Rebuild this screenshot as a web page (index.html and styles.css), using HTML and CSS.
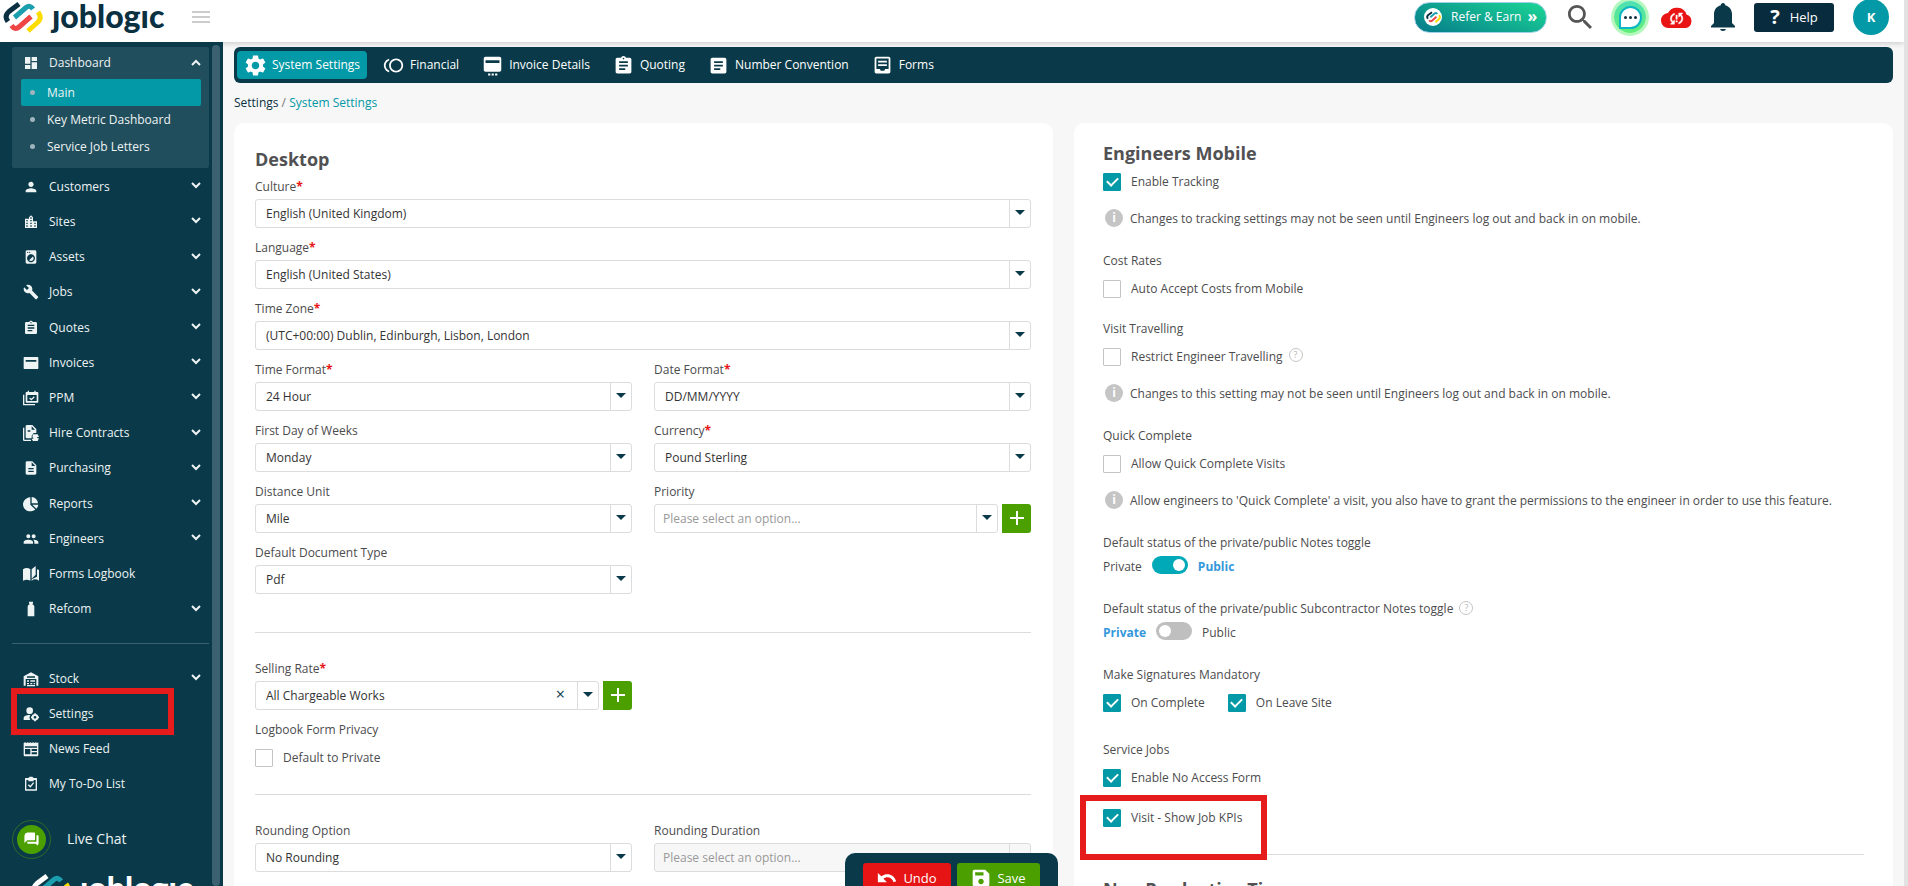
FILE: index.html
```html
<!DOCTYPE html>
<html lang="en">
<head>
<meta charset="utf-8">
<title>Joblogic - System Settings</title>
<link rel="stylesheet" href="styles.css">
</head>
<body>
<svg class="sprite" aria-hidden="true">
  <symbol id="mark" viewBox="0 0 40 32">
    <g fill="none" stroke-width="5" stroke-linecap="butt">
      <path class="mark-dark" d="M16 3L6 10.500Q1.500 14.500 4 19L5 20.500"/>
      <path stroke="#1b9fae" d="M11.500 16.500L23 6.500Q27 3.500 30 8"/>
      <path stroke="#f04545" d="M8.500 24.500Q12 29.500 16 26L28 15.500"/>
      <path stroke="#fddc00" d="M35 11L36 12.500Q39 17.500 34.500 21.500L25 30"/>
    </g>
  </symbol>
  <symbol id="chevron" viewBox="0 0 10 10"><path d="M1 3l4 4 4-4" fill="none" stroke="currentColor" stroke-width="2"/></symbol>
  <symbol id="dashboard" viewBox="0 0 24 24"><path d="M3 13h8V3H3v10zm0 8h8v-6H3v6zm10 0h8V11h-8v10zm0-18v6h8V3h-8z"/></symbol>
  <symbol id="person" viewBox="0 0 24 24"><path d="M12 12c2.210 0 4-1.790 4-4s-1.790-4-4-4-4 1.790-4 4 1.790 4 4 4zm0 2c-2.670 0-8 1.340-8 4v2h16v-2c0-2.660-5.330-4-8-4z"/></symbol>
  <symbol id="city" viewBox="0 0 24 24"><path d="M15 11V5l-3-3-3 3v2H3v14h18V11h-6zm-8 8H5v-2h2v2zm0-4H5v-2h2v2zm0-4H5V9h2v2zm6 8h-2v-2h2v2zm0-4h-2v-2h2v2zm0-4h-2V9h2v2zm0-4h-2V5h2v2zm6 12h-2v-2h2v2zm0-4h-2v-2h2v2z"/></symbol>
  <symbol id="washer" viewBox="0 0 24 24"><path d="M9.170 16.830c1.560 1.560 4.100 1.560 5.660 0 1.560-1.560 1.560-4.100 0-5.660l-5.660 5.660zM18 2.010L6 2c-1.110 0-2 .89-2 2v16c0 1.110.89 2 2 2h12c1.110 0 2-.89 2-2V4c0-1.110-.89-1.990-2-1.990zM10 4c.55 0 1 .45 1 1s-.45 1-1 1-1-.45-1-1 .45-1 1-1zM7 4c.55 0 1 .45 1 1s-.45 1-1 1-1-.45-1-1 .45-1 1-1zm5 16c-3.310 0-6-2.690-6-6s2.690-6 6-6 6 2.690 6 6-2.690 6-6 6z"/></symbol>
  <symbol id="wrench" viewBox="0 0 24 24"><path d="M22.700 19l-9.100-9.100c.9-2.300.4-5-1.500-6.900-2-2-5-2.400-7.400-1.300L9 6 6 9 1.600 4.700C.4 7.100.9 10.100 2.900 12.100c1.900 1.900 4.600 2.400 6.900 1.500l9.100 9.100c.4.4 1 .4 1.400 0l2.300-2.300c.5-.4.5-1.100.1-1.400z"/></symbol>
  <symbol id="clipboard" viewBox="0 0 24 24"><path d="M19 3h-4.180C14.400 1.840 13.300 1 12 1c-1.300 0-2.400.84-2.820 2H5c-1.100 0-2 .9-2 2v14c0 1.100.9 2 2 2h14c1.100 0 2-.9 2-2V5c0-1.100-.9-2-2-2zm-7 0c.55 0 1 .45 1 1s-.45 1-1 1-1-.45-1-1 .45-1 1-1zm2 14H7v-2h7v2zm3-4H7v-2h10v2zm0-4H7V7h10v2z"/></symbol>
  <symbol id="card" viewBox="0 0 24 24"><path fill-rule="evenodd" d="M2 3h20c.6 0 1 .4 1 1v16c0 .6-.4 1-1 1H2c-.6 0-1-.4-1-1V4c0-.6.4-1 1-1zM4 7.500V10h16V7.500z"/></symbol>
  <symbol id="events" viewBox="0 0 24 24"><path fill-rule="evenodd" d="M7 1h2v2h8V1h2v2h3c.6 0 1 .4 1 1v14c0 .6-.4 1-1 1H5c-.6 0-1-.4-1-1V4c0-.6.400-1 1-1h2zM6.500 7.500v9h14v-9zM0 7h2v14h16v2H1c-.6 0-1-.4-1-1z"/><path d="M10 12l2.500 2.500L17 10" fill="none" stroke="currentColor" stroke-width="2"/></symbol>
  <symbol id="hire" viewBox="0 0 24 24"><path fill-rule="evenodd" d="M6 0h8l6 6v6h-4l-3 4v4H6c-1 0-2-1-2-2V2c0-1 1-2 2-2zm7 2v5h5zM7 8v2h4V8zM0 4h2v18h10v2H2c-1 0-2-1-2-2z"/><path d="M15 14h7l2 4h-3l1 2h2l-2 4h-7l-2-3 3-1-2-2z"/></symbol>
  <symbol id="doc" viewBox="0 0 24 24"><path d="M14 2H6c-1.100 0-1.990.9-1.990 2L4 20c0 1.100.89 2 1.990 2H18c1.100 0 2-.9 2-2V8l-6-6zm2 16H8v-2h8v2zm0-4H8v-2h8v2zm-3-5V3.500L18.500 9H13z"/></symbol>
  <symbol id="pie" viewBox="0 0 24 24"><path d="M11 2v11l7.500 7.200A11 10.500 0 1 1 11 2zM13 1.500A10 10 0 0 1 22.500 11H13zM14 13h9a10 10 0 0 1-3 6z"/></symbol>
  <symbol id="group" viewBox="0 0 24 24"><path d="M16 11c1.660 0 2.990-1.340 2.990-3S17.660 5 16 5c-1.660 0-3 1.340-3 3s1.340 3 3 3zm-8 0c1.660 0 2.990-1.340 2.990-3S9.660 5 8 5C6.340 5 5 6.340 5 8s1.340 3 3 3zm0 2c-2.330 0-7 1.170-7 3.500V19h14v-2.500c0-2.330-4.670-3.500-7-3.500zm8 0c-.29 0-.62.02-.97.05 1.160.84 1.970 1.970 1.970 3.450V19h6v-2.500c0-2.330-4.670-3.500-7-3.500z"/></symbol>
  <symbol id="book" viewBox="0 0 24 24"><path d="M0 5q6-4 11 0v17q-5-3-11 0zM19 0l-6 5v14l6-6zM21 5l3 1v16q-6-4-11 0v-2l8-4z"/></symbol>
  <symbol id="bottle" viewBox="0 0 24 24"><path d="M9 1h6v3h-1v1c2 1 3 2 3 4v14H7V9c0-2 1-3 3-4V4H9z"/></symbol>
  <symbol id="warehouse" viewBox="0 0 24 24"><path d="M1 22V8l11-6 11 6v14h-3V12H4v10zM6 8v2h12V8zm0 6h3v2H6zm5 0h7v2h-7zm-5 4h3v2H6zm5 0h3v2h-3zm5 0h2v2h-2zM6 21h12v2H6z"/></symbol>
  <symbol id="usercog" viewBox="0 0 24 24"><circle cx="10" cy="7" r="5"/><path d="M1 21v-3c0-3 5-5 10-4.500-1.500 2.500-1.500 5 0 7.500z"/><circle cx="18" cy="17" r="3.500" fill="none" stroke="currentColor" stroke-width="3"/><path d="M16.800 11h2.500v2.500h-2.500zM16.800 20.500h2.500V23h-2.500zM12 15.800h2.500v2.500H12zM21.500 15.800H24v2.500h-2.500z"/></symbol>
  <symbol id="news" viewBox="0 0 24 24"><path fill-rule="evenodd" d="M1 3l2-1 2 1 2-1 2 1 2-1 2 1 2-1 2 1 2-1 2 1 2-1v19c0 1-1 2-2 2H3c-1 0-2-1-2-2zm2 5v2h18V8zm0 4v8h8v-8zm10 0v3h8v-3zm0 5v3h8v-3z"/></symbol>
  <symbol id="todo" viewBox="0 0 24 24"><path fill-rule="evenodd" d="M8 3l2-2h4l2 2h4c.6 0 1 .4 1 1v17c0 .6-.4 1-1 1H4c-.6 0-1-.4-1-1V4c0-.6.4-1 1-1zM5 6v14h14V6h-3v2H8V6z"/><path d="M8 13l3 3 5-6" fill="none" stroke="currentColor" stroke-width="2"/></symbol>
  <symbol id="gear" viewBox="2 2 20 20"><path d="M19.140 12.940c.04-.3.060-.61.060-.94 0-.32-.02-.64-.07-.94l2.030-1.580c.18-.14.23-.41.120-.61l-1.920-3.320c-.12-.22-.37-.29-.59-.22l-2.390.96c-.5-.38-1.030-.7-1.620-.94l-.36-2.540c-.04-.24-.24-.41-.48-.41h-3.840c-.24 0-.43.17-.47.41l-.36 2.540c-.59.24-1.130.57-1.620.94l-2.390-.96c-.22-.08-.47 0-.59.220L2.740 8.870c-.12.210-.08.47.120.61l2.030 1.580c-.05.3-.09.630-.09.940s.02.64.07.940l-2.030 1.580c-.18.14-.23.410-.12.610l1.920 3.320c.12.22.37.290.59.220l2.390-.96c.5.380 1.030.7 1.620.94l.36 2.540c.05.24.24.410.48.410h3.840c.24 0 .44-.17.470-.41l.36-2.540c.59-.24 1.130-.56 1.620-.94l2.390.96c.22.080.47 0 .59-.22l1.920-3.320c.12-.22.070-.47-.12-.61l-2.010-1.580zM12 15.600c-1.980 0-3.600-1.620-3.600-3.600s1.620-3.600 3.600-3.600 3.600 1.620 3.600 3.600-1.620 3.600-3.600 3.600z"/></symbol>
  <symbol id="toll" viewBox="0 0 24 24"><path d="M15 4c-4.420 0-8 3.580-8 8s3.580 8 8 8 8-3.580 8-8-3.580-8-8-8zm0 14c-3.310 0-6-2.690-6-6s2.690-6 6-6 6 2.690 6 6-2.690 6-6 6zM3 12c0-2.610 1.670-4.830 4-5.650V4.260C3.550 5.150 1 8.270 1 12s2.550 6.850 6 7.740v-2.090c-2.330-.82-4-3.040-4-5.650z"/></symbol>
  <symbol id="invoice" viewBox="0 0 24 24"><path fill-rule="evenodd" d="M4 2h16c1 0 2 1 2 2v13c0 1-1 2-2 2H4c-1 0-2-1-2-2V4c0-1 1-2 2-2zm0 4v3h16V6zM7 21h2.500v2.500H7zm4 0h2.500v2.500H11zm4 0h2.500v2.500H15z"/></symbol>
  <symbol id="article" viewBox="0 0 24 24"><path d="M19 3H5c-1.100 0-2 .9-2 2v14c0 1.100.9 2 2 2h14c1.100 0 2-.9 2-2V5c0-1.100-.9-2-2-2zm-5 14H7v-2h7v2zm3-4H7v-2h10v2zm0-4H7V7h10v2z"/></symbol>
  <symbol id="forms" viewBox="0 0 24 24"><path fill-rule="evenodd" d="M5 2h14c1.100 0 2 .9 2 2v15c0 1.100-.9 2-2 2H5c-1.100 0-2-.9-2-2V4c0-1.100.9-2 2-2zm0 2v12h4l1 2h4l1-2h4V4zM7 6.500h10v2H7zm0 4h10v2H7z"/></symbol>
  <symbol id="search" viewBox="3 3 17.500 17.500"><path d="M15.500 14h-.79l-.28-.27C15.410 12.590 16 11.110 16 9.500 16 5.910 13.090 3 9.500 3S3 5.910 3 9.500 5.910 16 9.500 16c1.610 0 3.090-.59 4.230-1.570l.27.280v.79l5 4.990L20.490 19l-4.990-5zm-6 0C7.010 14 5 11.990 5 9.500S7.010 5 9.500 5 14 7.010 14 9.500 11.990 14 9.500 14z"/></symbol>
  <symbol id="bell" viewBox="0 0 24 28"><path d="M12 0c1.400 0 2.200 1 2.200 2.200C18 3.200 21 6.500 21 11v9l3 3v1.500H0V23l3-3v-9c0-4.500 3-7.800 6.800-8.800C9.800 1 10.600 0 12 0zM9.200 26h5.600c0 1.200-1.200 2-2.800 2s-2.800-.8-2.800-2z"/></symbol>
  <symbol id="cloud" viewBox="0 0 32 22"><path fill="#e91414" d="M8 22a7.500 7.500 0 0 1-1-15A10 9.500 0 0 1 25.500 8.500 7 7 0 0 1 25 22z"/><path fill="#fff" transform="translate(7.200 4.200) scale(.7)" d="M3 12c0 2.210.91 4.200 2.360 5.640L3 20h6v-6l-2.240 2.240C5.680 15.150 5 13.660 5 12c0-2.610 1.670-4.830 4-5.650V4.260C5.550 5.150 3 8.270 3 12zm8 5h2v-2h-2v2zM21 4h-6v6l2.240-2.240C18.320 8.850 19 10.340 19 12c0 2.610-1.670 4.830-4 5.650v2.090c3.450-.89 6-4.010 6-7.740 0-2.210-.91-4.200-2.360-5.640L21 4zm-10 9h2V7h-2v6z" stroke="#fff" stroke-width=".6"/></symbol>
  <symbol id="forum" viewBox="0 0 24 24"><path d="M21 6h-2v9H6v2c0 .55.45 1 1 1h11l4 4V7c0-.55-.45-1-1-1zm-4 6V3c0-.55-.45-1-1-1H3c-.55 0-1 .45-1 1v14l4-4h10c.55 0 1-.45 1-1z"/></symbol>
  <symbol id="undo" viewBox="0 0 24 24"><path d="M1 6v11h11l-4.200-4c4-3.500 10-2 12.200 4l3-1C20.500 8 12 5 5.300 10z"/></symbol>
  <symbol id="save" viewBox="0 0 24 24"><path d="M17 2H4c-1.110 0-2 .9-2 2v16c0 1.100.89 2 2 2h16c1.100 0 2-.9 2-2V7l-5-5zm-5 17.500c-1.900 0-3.300-1.400-3.300-3.300s1.400-3.300 3.300-3.300 3.300 1.400 3.300 3.300-1.400 3.300-3.300 3.300zM15 9H5V5h10v4z"/></symbol>
  <symbol id="plus" viewBox="0 0 14 14"><path d="M7 0v14M0 7h14" stroke="currentColor" stroke-width="2"/></symbol>
</svg>

<header class="topbar">
  <a class="brand" href="#" aria-label="joblogic">
    <svg class="brand-mark"><use href="#mark"/></svg>
    <span class="brand-name">ȷoblogıc</span>
  </a>
  <button class="menu-toggle" type="button" aria-label="Toggle menu"><i></i><i></i><i></i></button>
  <div class="actions">
    <button class="refer" type="button"><span class="refer-badge"><svg><use href="#mark"/></svg></span><span>Refer &amp; Earn</span><b>»</b></button>
    <button class="icon-btn search-btn" type="button" aria-label="Search"><svg><use href="#search"/></svg></button>
    <button class="chat-btn" type="button" aria-label="Messages"><span><i></i><i></i><i></i></span></button>
    <button class="icon-btn cloud-btn" type="button" aria-label="Sync"><svg><use href="#cloud"/></svg></button>
    <button class="icon-btn bell-btn" type="button" aria-label="Notifications"><svg><use href="#bell"/></svg></button>
    <button class="help" type="button"><b>?</b><span>Help</span></button>
    <button class="avatar" type="button">K</button>
  </div>
</header>

<div class="shell">
  <aside class="sidebar">
    <nav class="side-nav">
      <section class="open-group">
        <a class="nav-item" href="#"><svg><use href="#dashboard"/></svg><span>Dashboard</span><svg class="chev up"><use href="#chevron"/></svg></a>
        <ul class="sub-nav">
          <li><a class="active" href="#">Main</a></li>
          <li><a href="#">Key Metric Dashboard</a></li>
          <li><a href="#">Service Job Letters</a></li>
        </ul>
      </section>
      <div class="nav-list">
        <a class="nav-item" href="#"><svg><use href="#person"/></svg><span>Customers</span><svg class="chev"><use href="#chevron"/></svg></a>
        <a class="nav-item" href="#"><svg><use href="#city"/></svg><span>Sites</span><svg class="chev"><use href="#chevron"/></svg></a>
        <a class="nav-item" href="#"><svg><use href="#washer"/></svg><span>Assets</span><svg class="chev"><use href="#chevron"/></svg></a>
        <a class="nav-item" href="#"><svg><use href="#wrench"/></svg><span>Jobs</span><svg class="chev"><use href="#chevron"/></svg></a>
        <a class="nav-item" href="#"><svg><use href="#clipboard"/></svg><span>Quotes</span><svg class="chev"><use href="#chevron"/></svg></a>
        <a class="nav-item" href="#"><svg><use href="#card"/></svg><span>Invoices</span><svg class="chev"><use href="#chevron"/></svg></a>
        <a class="nav-item" href="#"><svg><use href="#events"/></svg><span>PPM</span><svg class="chev"><use href="#chevron"/></svg></a>
        <a class="nav-item" href="#"><svg><use href="#hire"/></svg><span>Hire Contracts</span><svg class="chev"><use href="#chevron"/></svg></a>
        <a class="nav-item" href="#"><svg><use href="#doc"/></svg><span>Purchasing</span><svg class="chev"><use href="#chevron"/></svg></a>
        <a class="nav-item" href="#"><svg><use href="#pie"/></svg><span>Reports</span><svg class="chev"><use href="#chevron"/></svg></a>
        <a class="nav-item" href="#"><svg><use href="#group"/></svg><span>Engineers</span><svg class="chev"><use href="#chevron"/></svg></a>
        <a class="nav-item" href="#"><svg><use href="#book"/></svg><span>Forms Logbook</span></a>
        <a class="nav-item" href="#"><svg><use href="#bottle"/></svg><span>Refcom</span><svg class="chev"><use href="#chevron"/></svg></a>
      </div>
      <hr class="nav-rule">
      <div class="nav-list secondary">
        <a class="nav-item" href="#"><svg><use href="#warehouse"/></svg><span>Stock</span><svg class="chev"><use href="#chevron"/></svg></a>
        <a class="nav-item marked" href="#"><svg><use href="#usercog"/></svg><span>Settings</span></a>
        <a class="nav-item" href="#"><svg><use href="#news"/></svg><span>News Feed</span></a>
        <a class="nav-item" href="#"><svg><use href="#todo"/></svg><span>My To-Do List</span></a>
      </div>
      <a class="live-chat" href="#"><span class="live-icon"><svg><use href="#forum"/></svg></span><span>Live Chat</span></a>
      <div class="brand brand-light"><svg class="brand-mark"><use href="#mark"/></svg><span class="brand-name">ȷoblogıc</span></div>
    </nav>
    <div class="scroll-thumb"></div>
  </aside>

  <main class="content">
    <nav class="tabs">
      <a class="tab active" href="#"><svg><use href="#gear"/></svg>System Settings</a>
      <a class="tab" href="#"><svg><use href="#toll"/></svg>Financial</a>
      <a class="tab" href="#"><svg><use href="#invoice"/></svg>Invoice Details</a>
      <a class="tab" href="#"><svg><use href="#clipboard"/></svg>Quoting</a>
      <a class="tab" href="#"><svg><use href="#article"/></svg>Number Convention</a>
      <a class="tab" href="#"><svg><use href="#forms"/></svg>Forms</a>
    </nav>
    <div class="crumbs"><a href="#">Settings</a> / <a class="here" href="#">System Settings</a></div>

    <div class="cards">
      <section class="card desktop">
        <h2>Desktop</h2>
        <div class="grid">
          <div class="field wide"><label for="culture">Culture<em>*</em></label><div class="row"><div class="select"><select id="culture"><option>English (United Kingdom)</option></select></div></div></div>
          <div class="field wide"><label for="language">Language<em>*</em></label><div class="row"><div class="select"><select id="language"><option>English (United States)</option></select></div></div></div>
          <div class="field wide"><label for="zone">Time Zone<em>*</em></label><div class="row"><div class="select"><select id="zone"><option>(UTC+00:00) Dublin, Edinburgh, Lisbon, London</option></select></div></div></div>
          <div class="field"><label for="timefmt">Time Format<em>*</em></label><div class="row"><div class="select"><select id="timefmt"><option>24 Hour</option></select></div></div></div>
          <div class="field"><label for="datefmt">Date Format<em>*</em></label><div class="row"><div class="select"><select id="datefmt"><option>DD/MM/YYYY</option></select></div></div></div>
          <div class="field"><label for="firstday">First Day of Weeks</label><div class="row"><div class="select"><select id="firstday"><option>Monday</option></select></div></div></div>
          <div class="field"><label for="currency">Currency<em>*</em></label><div class="row"><div class="select"><select id="currency"><option>Pound Sterling</option></select></div></div></div>
          <div class="field"><label for="distance">Distance Unit</label><div class="row"><div class="select"><select id="distance"><option>Mile</option></select></div></div></div>
          <div class="field"><label for="priority">Priority</label><div class="row"><div class="select"><select id="priority" class="empty"><option>Please select an option...</option></select></div><button class="add" type="button" aria-label="Add priority"><svg><use href="#plus"/></svg></button></div></div>
          <div class="field"><label for="doctype">Default Document Type</label><div class="row"><div class="select"><select id="doctype"><option>Pdf</option></select></div></div></div>
        </div>
        <hr>
        <div class="grid">
          <div class="field"><label for="rate">Selling Rate<em>*</em></label><div class="row"><div class="select clearable"><select id="rate"><option>All Chargeable Works</option></select><button class="clear" type="button" aria-label="Clear selling rate">×</button></div><button class="add" type="button" aria-label="Add selling rate"><svg><use href="#plus"/></svg></button></div></div>
        </div>
        <h3>Logbook Form Privacy</h3>
        <label class="check"><input type="checkbox"><span>Default to Private</span></label>
        <hr class="second">
        <div class="grid">
          <div class="field"><label for="rounding">Rounding Option</label><div class="row"><div class="select"><select id="rounding"><option>No Rounding</option></select></div></div></div>
          <div class="field"><label for="duration">Rounding Duration</label><div class="row"><div class="select off"><select id="duration" class="empty" disabled><option>Please select an option...</option></select></div></div></div>
        </div>
      </section>

      <section class="card mobile">
        <h2>Engineers Mobile</h2>
        <label class="check"><input type="checkbox" checked><span>Enable Tracking</span></label>
        <p class="info"><i>i</i><span>Changes to tracking settings may not be seen until Engineers log out and back in on mobile.</span></p>
        <h3>Cost Rates</h3>
        <label class="check"><input type="checkbox"><span>Auto Accept Costs from Mobile</span></label>
        <h3>Visit Travelling</h3>
        <label class="check"><input type="checkbox"><span>Restrict Engineer Travelling</span><i class="hint">?</i></label>
        <p class="info"><i>i</i><span>Changes to this setting may not be seen until Engineers log out and back in on mobile.</span></p>
        <h3>Quick Complete</h3>
        <label class="check"><input type="checkbox"><span>Allow Quick Complete Visits</span></label>
        <p class="info"><i>i</i><span>Allow engineers to 'Quick Complete' a visit, you also have to grant the permissions to the engineer in order to use this feature.</span></p>
        <h3>Default status of the private/public Notes toggle</h3>
        <label class="switch"><span>Private</span><input type="checkbox" checked><b>Public</b></label>
        <h3>Default status of the private/public Subcontractor Notes toggle<i class="hint">?</i></h3>
        <label class="switch"><b>Private</b><input type="checkbox"><span>Public</span></label>
        <h3>Make Signatures Mandatory</h3>
        <div class="check-row">
          <label class="check"><input type="checkbox" checked><span>On Complete</span></label>
          <label class="check"><input type="checkbox" checked><span>On Leave Site</span></label>
        </div>
        <h3>Service Jobs</h3>
        <label class="check"><input type="checkbox" checked><span>Enable No Access Form</span></label>
        <label class="check marked"><input type="checkbox" checked><span>Visit - Show Job KPIs</span></label>
        <hr>
        <h2>Non Productive Time</h2>
      </section>
    </div>
  </main>
</div>

<div class="save-bar">
  <button class="undo" type="button"><svg><use href="#undo"/></svg>Undo</button>
  <button class="save" type="button"><svg><use href="#save"/></svg>Save</button>
</div>
</body>
</html>
```
FILE: styles.css
```css
* { box-sizing: border-box; }
html, body { height: 100%; }
body {
  margin: 0;
  display: flex;
  flex-direction: column;
  overflow: hidden;
  border-right: 4px solid #e2e2e2;
  background: #f7f7f7;
  color: #4c4c4e;
  font: 12px/20px "Open Sans", "Noto Sans", sans-serif;
}
.sprite { position: absolute; width: 0; height: 0; }
button, select, input { font: inherit; color: inherit; margin: 0; }
button { border: 0; padding: 0; background: none; }
a { color: inherit; text-decoration: none; }
svg { fill: currentColor; flex: none; }
h2, h3, p, ul { margin: 0; padding: 0; }

/* Header */
.topbar {
  position: relative;
  z-index: 2;
  flex: none;
  height: 42px;
  padding: 0 15px 8px 3px;
  display: flex;
  align-items: center;
  background: #fff;
  box-shadow: 0 1px 6px rgba(0, 0, 0, .2);
}
.brand { display: flex; align-items: center; gap: 9px; color: #0a3041; --dark: #0a3041; }
.brand-mark { width: 40px; height: 32px; }
.mark-dark { stroke: var(--dark); }
.brand-name { padding-bottom: 2px; font: 900 32px/32px Lato, sans-serif; }
.menu-toggle { display: grid; gap: 3px; margin-left: 28px; }
.menu-toggle i { width: 18px; height: 2px; background: #ccc; }
.actions { margin-left: auto; display: flex; align-items: center; }
.refer {
  display: flex;
  align-items: center;
  gap: 9px;
  width: 133px;
  height: 31px;
  padding: 0 9px;
  border: 1px solid #9fd0e8;
  border-radius: 16px;
  background: linear-gradient(20deg, #067a8b, #1bd795);
  color: #fff;
  white-space: nowrap;
}
.refer b { font-size: 16px; line-height: 16px; margin-left: -3px; padding-bottom: 2px; }
.refer-badge { display: flex; flex: none; width: 18px; height: 18px; align-items: center; justify-content: center; border-radius: 50%; background: #fff; --dark: #0a3041; }
.refer-badge svg { width: 15px; height: 12px; }
.icon-btn { display: flex; }
.search-btn { margin-left: 21px; color: #555; }
.search-btn svg { width: 24px; height: 24px; }
.chat-btn {
  display: grid;
  place-items: center;
  width: 32px;
  height: 32px;
  margin-left: 22px;
  border-radius: 50%;
  background: linear-gradient(#4fe0b4, #62ee76);
  box-shadow: 0 0 0 3px #b5f8bd;
}
.chat-btn span {
  display: flex;
  gap: 2px;
  align-items: center;
  justify-content: center;
  width: 23px;
  height: 23px;
  border: 2px solid #0cb6c4;
  border-radius: 50% 50% 50% 0;
  background: #fff;
}
.chat-btn i { width: 3px; height: 3px; border-radius: 50%; background: #0a3041; }
.cloud-btn { margin-left: 15px; }
.cloud-btn svg { width: 32px; height: 22px; }
.bell-btn { margin-left: 18px; color: #0a3a49; }
.bell-btn svg { width: 24px; height: 28px; }
.help {
  display: flex;
  align-items: center;
  justify-content: center;
  gap: 10px;
  width: 80px;
  height: 29px;
  margin-left: 19px;
  border-radius: 3px;
  background: #082c3e;
  color: #fff;
  font-size: 13px;
}
.help b { font-size: 20px; }
.avatar { width: 36px; height: 36px; margin-left: 19px; border-radius: 50%; background: #0399a6; color: #fff; font-size: 13px; font-weight: 700; }

/* Shell */
.shell { flex: 1; min-height: 0; display: flex; }
.sidebar {
  position: relative;
  z-index: 3;
  flex: none;
  width: 223px;
  padding: 5px 3px 0 12px;
  display: flex;
  justify-content: space-between;
  overflow: hidden;
  background: #0a3a49;
  color: #eef3f4;
}
.side-nav { width: 197px; }
.scroll-thumb { width: 8px; margin-top: -2px; border-radius: 4px; background: #3b6170; }
.open-group { height: 121px; background: #214e5c; border-radius: 2px; }
.nav-item { display: flex; align-items: center; height: 100%; padding: 0 8px 0 11px; }
.open-group .nav-item { height: 32px; }
.nav-item svg { width: 16px; height: 16px; }
.nav-item span { flex: 1; margin-left: 10px; }
.nav-item .chev { width: 10px; height: 10px; margin-bottom: 3px; }
.nav-item .chev.up { transform: rotate(180deg); margin-bottom: 0; }
.sub-nav { list-style: none; padding: 0 8px 0 9px; }
.sub-nav a { display: flex; align-items: center; gap: 12px; height: 27px; padding-left: 9px; border-radius: 2px; }
.sub-nav a::before { content: ""; width: 5px; height: 5px; border-radius: 50%; background: #9fb4bd; }
.sub-nav a.active { background: #0399a6; }
.nav-list { display: grid; grid-auto-rows: 1fr; height: 458px; margin-top: 1px; }
.nav-rule { border: 0; border-top: 1px solid #3b6170; margin: 16px 0 17px; }
.nav-list.secondary { height: 141px; margin: 0; }
.nav-item.marked { position: relative; }
.nav-item.marked::after {
  content: "";
  position: absolute;
  inset: -8px 35px -3px -1px;
  border: 6px solid #e61b1b;
}
.live-chat { display: flex; align-items: center; gap: 16px; height: 46px; margin-top: 14px; font-size: 14px; }
.live-icon { display: grid; place-items: center; width: 39px; height: 39px; border: 1px solid #2d6b2b; border-radius: 50%; }
.live-icon svg { width: 29px; height: 29px; padding: 6px; border-radius: 50%; background: #4ba000; color: #fff; }
.brand-light { margin: 10px 0 0 19px; color: #fff; --dark: #fff; }

.content { flex: 1; min-width: 0; padding: 5px 11px 0 11px; }
.tabs { display: flex; align-items: center; gap: 8px; height: 36px; padding: 0 3px; border-radius: 6px; background: #0a3a49; color: #fff; }
.tab { display: flex; align-items: center; gap: 6px; height: 28px; padding: 0 7px 0 8px; border-radius: 4px; }
.tab.active { background: #0399a6; }
.tab svg { width: 21px; height: 21px; }
.crumbs { margin: 10px 0; color: #777; }
.crumbs a { color: #0a3041; }
.crumbs .here { color: #0399a6; }

.cards { display: grid; grid-template-columns: 1fr 1fr; gap: 21px; }
.card { padding: 0 22px 40px 21px; border-radius: 10px; background: #fff; }
.card h2 { font-size: 18px; line-height: 24px; font-weight: 700; color: #515153; }
.card h3 { font-size: 12px; line-height: 20px; font-weight: 500; }
.card hr { border: 0; border-top: 1px solid #dcdcdc; margin: 0; }
.desktop { padding-top: 24px; }
.desktop h2 { margin-bottom: 6px; }
.grid { display: grid; grid-template-columns: 1fr 1fr; gap: 10px 22px; }
.wide { grid-column: 1 / -1; }
.field label { display: block; margin-bottom: 2px; font-weight: 500; }
em { color: #e61414; font-style: normal; font-weight: 700; }
.row { display: flex; gap: 4px; }
.select { position: relative; flex: 1; display: flex; height: 29px; border: 1px solid #dcdcdc; border-radius: 3px; }
.select::before { content: ""; position: absolute; top: 0; bottom: 0; right: 20px; border-left: 1px solid #dcdcdc; }
.select::after { content: ""; position: absolute; top: 10px; right: 5px; border: 5px solid transparent; border-top-color: #0a3a49; border-bottom: 0; }
select { appearance: none; flex: 1; width: 100%; padding: 0 30px 0 10px; border: 0; background: none; color: #333; }
select.empty { padding-left: 8px; color: #999; opacity: 1; }
.select.off { background: #f7f7f7; }
.select.off::after { display: none; }
.clear { position: absolute; right: 33px; top: 2px; font-size: 16px; color: #0a3a49; }
.add { display: grid; place-items: center; width: 29px; height: 29px; border-radius: 0 3px 3px 0; background: #4ba000; color: #fff; }
.add svg { width: 14px; height: 14px; margin-bottom: 2px; }
.desktop hr { margin: 38px 0 26px; }
.desktop h3 { margin-top: 10px; }
.desktop hr.second { margin-top: 26px; }

.check { display: flex; align-items: center; height: 20px; font-weight: 500; }
.check input { appearance: none; display: grid; place-items: center; width: 18px; height: 18px; margin-right: 10px; border: 1px solid #c4c4c4; border-radius: 1px; background: #fff; }
.check input:checked { border-color: #0399a6; background: #0399a6; }
.check input:checked::before { content: ""; width: 5px; height: 9px; margin-top: -3px; border: solid #fff; border-width: 0 2px 2px 0; transform: rotate(45deg); }
.info { display: flex; align-items: center; gap: 7px; padding-left: 2px; margin-top: 17px; height: 20px; }
.info i { width: 18px; height: 18px; margin-bottom: 2px; border-radius: 50%; background: #c5c5c5; color: #fff; font: 700 12px/18px "Open Sans", sans-serif; text-align: center; }
.mobile { padding: 18px 29px 0; }
.mobile h2 { margin-bottom: 7px; }
.mobile h3 { margin-top: 22px; }
.mobile .check + h3 { margin-top: 20px; }
.mobile .check-row + h3 { margin-top: 27px; }
h3 + .check, h3 + .check-row { margin-top: 8px; }
.hint { display: inline-block; width: 14px; height: 14px; margin: 0 0 4px 6px; border: 1px solid #c4c4c4; border-radius: 50%; color: #b5b5b5; font: 9px/12px "Open Sans", sans-serif; text-align: center; vertical-align: middle; }
.switch { display: flex; align-items: center; gap: 10px; margin-top: 4px; height: 20px; }
.switch b { color: #3498db; }
.switch input { appearance: none; width: 36px; height: 18px; padding: 3px; margin-bottom: 4px; border-radius: 9px; background: #bfbfbf; }
.switch input::before { content: ""; display: block; width: 12px; height: 12px; border-radius: 50%; background: #fff; }
.switch input:checked { background: #00a9b7; }
.switch input:checked::before { margin-left: 18px; }
.check-row { display: flex; gap: 23px; }
.check.marked { position: relative; width: max-content; margin-top: 20px; }
.check.marked::after { content: ""; position: absolute; z-index: 1; inset: -13px -25px -32px -23px; border: 6px solid #e61b1b; }
.mobile hr { margin: 26px 0 22px; }

.save-bar { position: absolute; z-index: 4; left: 845px; bottom: 0; display: flex; gap: 6px; height: 33px; padding: 10px 18px 0; border-radius: 10px 10px 0 0; background: #0a3a49; overflow: hidden; }
.save-bar button { display: flex; align-items: center; justify-content: center; gap: 6px; width: 88px; height: 29px; border-radius: 3px; color: #fff; font-size: 13px; }
.save-bar svg { width: 20px; height: 20px; }
.save-bar .undo { background: #e61414; }
.save-bar .save { width: 83px; background: #4ba000; }
```
